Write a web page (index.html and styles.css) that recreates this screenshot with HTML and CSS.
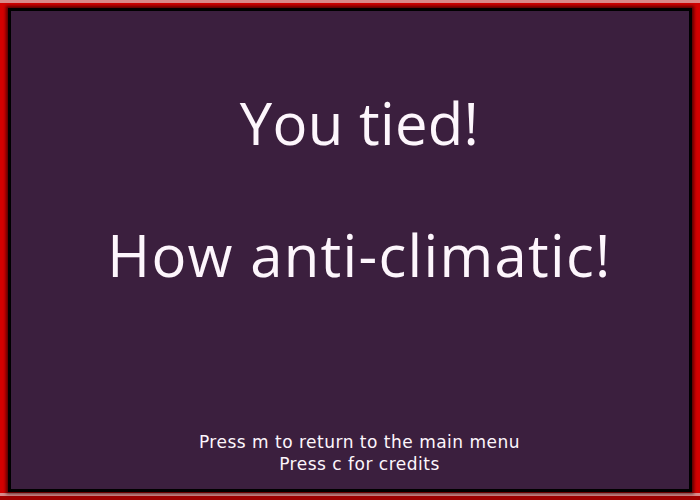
FILE: index.html
```html
<!DOCTYPE html>
<html>
<head>
<meta charset="utf-8">
<link rel="stylesheet" href="styles.css">
</head>
<body>
<div class="frame">
  <div class="screen">
    <div class="headline">
      <p class="big first">You tied!</p>
      <p class="big second">How anti-climatic!</p>
    </div>
    <div class="hints">
      <p>Press m to return to the main menu</p>
      <p>Press c for credits</p>
    </div>
  </div>
</div>
</body>
</html>
```
FILE: styles.css
```css
html, body {
  margin: 0;
  padding: 0;
  width: 700px;
  height: 500px;
  overflow: hidden;
}
.frame {
  box-sizing: border-box;
  width: 700px;
  height: 500px;
  padding: 8px;
  background:
    linear-gradient(to bottom, #d98a8a 0, #d98a8a 3px, transparent 3px, transparent 493px, #d98a8a 493px, #d98a8a 496px, #a00000 496px, #a00000 500px),
    #d20000;
}
.screen {
  box-sizing: border-box;
  height: 484px;
  border: 3px solid #000;
  background: #3b1f3e;
  box-shadow: 0 0 3px 2px rgba(0,0,0,0.6);
  padding-left: 19px;
  display: flex;
  flex-direction: column;
  align-items: center;
  color: #fdf6fc;
  font-family: "Open Sans", "DejaVu Sans", sans-serif;
}
.headline {
  padding-top: 46px;
  text-align: center;
}
.big {
  margin: 0;
  font-size: 58px;
  line-height: 132px;
}
.first {
  letter-spacing: 0.3px;
}
.second {
  letter-spacing: 1.3px;
}
.hints {
  margin-top: auto;
  padding-bottom: 14px;
  text-align: center;
  font-family: "DejaVu Sans", sans-serif;
}
.hints p {
  margin: 0;
  font-size: 17px;
  line-height: 22px;
  letter-spacing: 0.5px;
}
```
